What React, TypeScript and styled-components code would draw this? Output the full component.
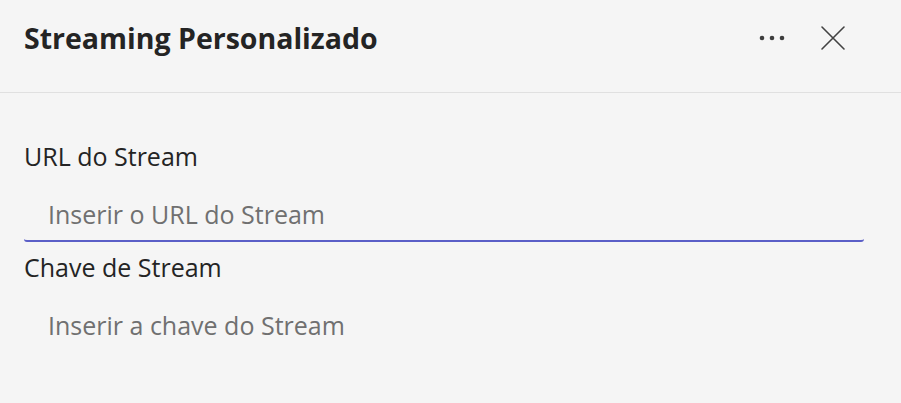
import React from 'react';
import styled, { createGlobalStyle } from 'styled-components';

const GlobalStyle = createGlobalStyle`
    html, body {
        margin: 0;
        padding: 0;
        background: #f5f5f5;
    }
    body {
        font-family: 'Open Sans', 'Noto Sans', sans-serif;
        color: #242424;
    }
`;

const App = (): JSX.Element => {
    return (
        <>
            <GlobalStyle />
            <Panel>
                <Header>
                    <Title>Streaming Personalizado</Title>
                    <Actions>
                        <IconButton aria-label="Mais opções">
                            <svg width="26" height="6" viewBox="0 0 26 6">
                                <circle cx="3" cy="3" r="2.3" fill="#3d3d3d" />
                                <circle cx="13" cy="3" r="2.3" fill="#3d3d3d" />
                                <circle cx="23" cy="3" r="2.3" fill="#3d3d3d" />
                            </svg>
                        </IconButton>
                        <IconButton aria-label="Fechar">
                            <svg width="26" height="26" viewBox="0 0 26 26">
                                <path d="M2 2 L24 24 M24 2 L2 24" stroke="#424242" strokeWidth="1.6" strokeLinecap="round" />
                            </svg>
                        </IconButton>
                    </Actions>
                </Header>
                <Body>
                    <Field>
                        <Label htmlFor="url">URL do Stream</Label>
                        <Input id="url" placeholder="Inserir o URL do Stream" $focused />
                    </Field>
                    <Field>
                        <Label htmlFor="key">Chave de Stream</Label>
                        <Input id="key" placeholder="Inserir a chave do Stream" />
                    </Field>
                </Body>
            </Panel>
        </>
    );
};

const Panel = styled.div`
    width: 901px;
    height: 403px;
    background: #f5f5f5;
    overflow: hidden;
`;

const Header = styled.header`
    height: 93px;
    box-sizing: border-box;
    padding: 0 55px 17px 24px;
    display: flex;
    align-items: center;
    justify-content: space-between;
    border-bottom: 1px solid #e0e0e0;
`;

const Title = styled.h1`
    margin: 0;
    font-size: 28.5px;
    line-height: 38px;
    font-weight: 700;
    color: #242424;
`;

const Actions = styled.div`
    display: flex;
    align-items: center;
    gap: 35px;
`;

const IconButton = styled.button`
    border: none;
    background: transparent;
    padding: 0;
    display: flex;
    align-items: center;
    cursor: pointer;
`;

const Body = styled.div`
    padding: 46px 37px 0 24px;
    display: flex;
    flex-direction: column;
    gap: 8px;
`;

const Field = styled.div`
    display: flex;
    flex-direction: column;
    gap: 8px;
`;

const Label = styled.label`
    font-size: 25px;
    line-height: 34px;
    color: #242424;
`;

const Input = styled.input<{ $focused?: boolean }>`
    height: 61px;
    box-sizing: border-box;
    border: none;
    border-bottom: 2px solid ${(props) => (props.$focused ? '#5b5fc7' : 'transparent')};
    border-radius: 0 0 3px 3px;
    background: transparent;
    padding: 6px 24px 0;
    font-family: 'Open Sans', 'Noto Sans', sans-serif;
    font-size: 25px;
    color: #242424;
    outline: none;
    &::placeholder {
        color: #707070;
    }
`;

export default App;
